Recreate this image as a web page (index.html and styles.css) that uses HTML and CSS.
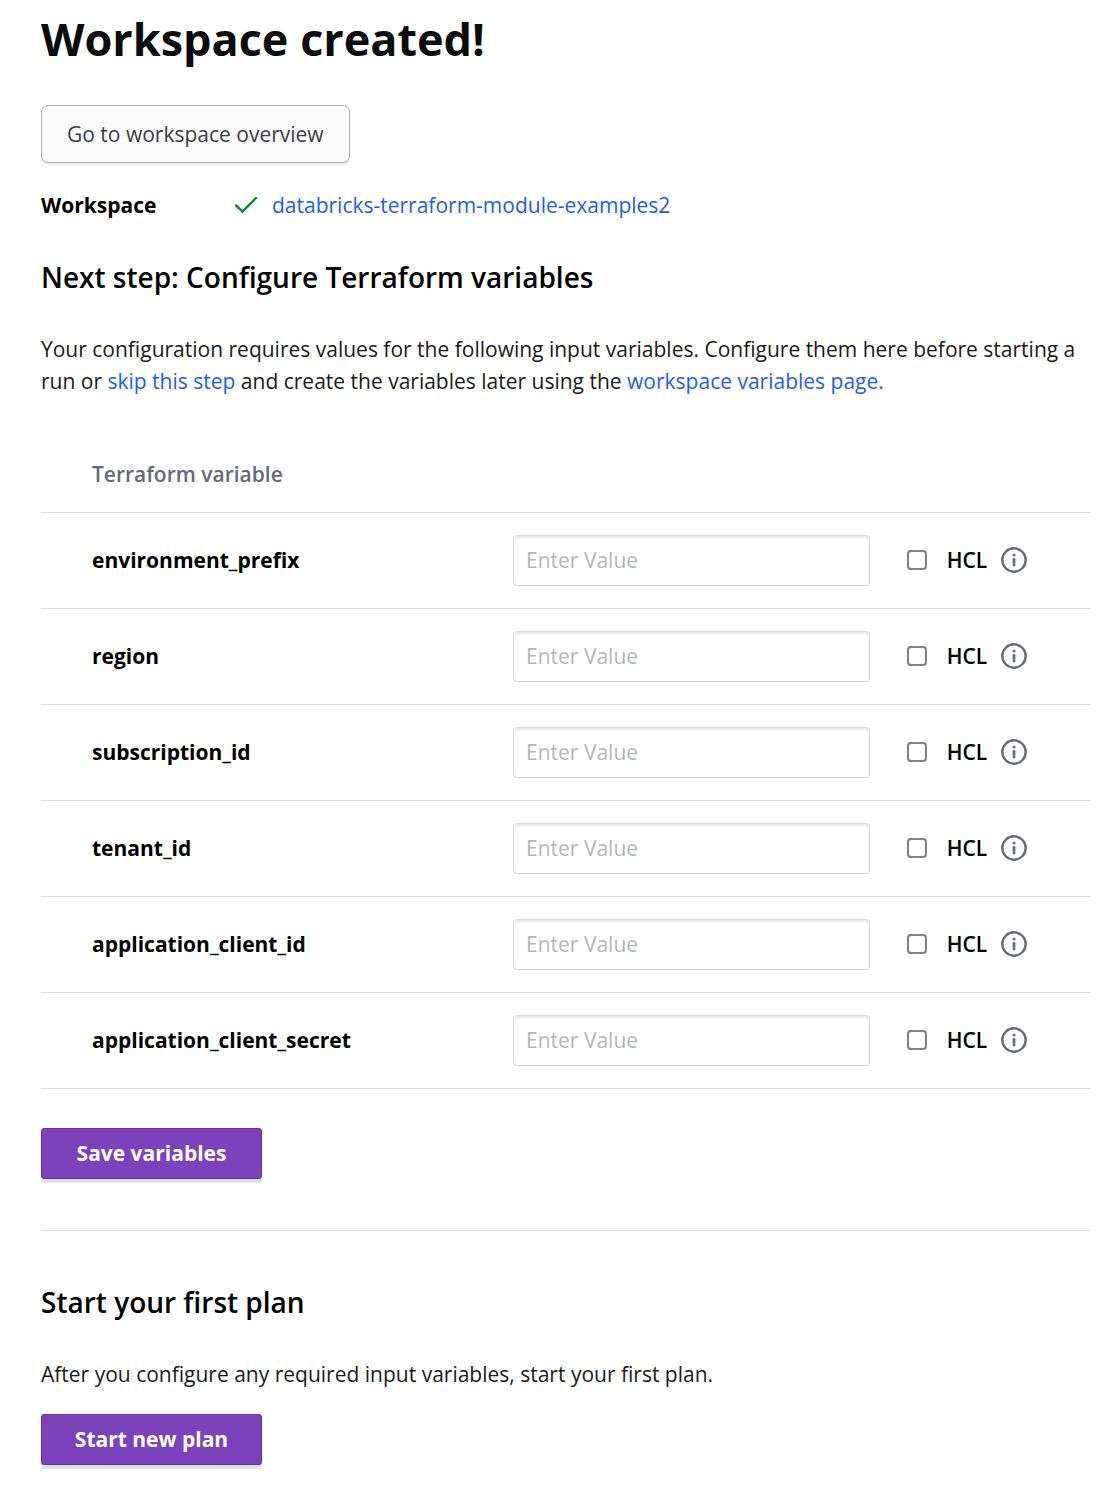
FILE: index.html
```html
<!DOCTYPE html>
<html lang="en">
<head>
    <meta charset="utf-8">
    <title>Workspace created!</title>
    <link rel="stylesheet" href="styles.css">
</head>
<body>
    <!-- shared info icon -->
    <svg class="sprite" aria-hidden="true">
        <symbol id="info" viewBox="0 0 26 26">
            <circle cx="13" cy="13" r="11.7" fill="none" stroke="currentColor" stroke-width="2.4"/>
            <circle cx="13" cy="8" r="1.6" fill="currentColor"/>
            <path d="M13 12.2v6" stroke="currentColor" stroke-width="2.6" stroke-linecap="round"/>
        </symbol>
    </svg>

    <main class="page">
        <h1>Workspace created!</h1>
        <button class="btn btn-secondary" type="button">Go to workspace overview</button>

        <div class="workspace">
            <span class="workspace-label">Workspace</span>
            <svg class="check" viewBox="0 0 24 18" aria-hidden="true">
                <path d="M2 9.5L8.5 15.5L22 2" fill="none" stroke="currentColor" stroke-width="2.4" stroke-linecap="round"/>
            </svg>
            <a href="#">databricks-terraform-module-examples2</a>
        </div>

        <h2>Next step: Configure Terraform variables</h2>
        <p>Your configuration requires values for the following input variables. Configure them here before starting a run or <a href="#">skip this step</a> and create the variables later using the <a href="#">workspace variables page.</a></p>

        <form>
            <table class="variables">
                <thead>
                    <tr>
                        <th class="col-name" scope="col">Terraform variable</th>
                        <td class="col-value"></td>
                        <td class="col-hcl"></td>
                    </tr>
                </thead>
                <tbody>
                    <tr>
                        <th scope="row"><label for="environment_prefix">environment_prefix</label></th>
                        <td><input class="value" type="text" id="environment_prefix" placeholder="Enter Value"></td>
                        <td><div class="hcl"><input type="checkbox" id="hcl-1"><label for="hcl-1">HCL</label><svg class="info"><use href="#info"/></svg></div></td>
                    </tr>
                    <tr>
                        <th scope="row"><label for="region">region</label></th>
                        <td><input class="value" type="text" id="region" placeholder="Enter Value"></td>
                        <td><div class="hcl"><input type="checkbox" id="hcl-2"><label for="hcl-2">HCL</label><svg class="info"><use href="#info"/></svg></div></td>
                    </tr>
                    <tr>
                        <th scope="row"><label for="subscription_id">subscription_id</label></th>
                        <td><input class="value" type="text" id="subscription_id" placeholder="Enter Value"></td>
                        <td><div class="hcl"><input type="checkbox" id="hcl-3"><label for="hcl-3">HCL</label><svg class="info"><use href="#info"/></svg></div></td>
                    </tr>
                    <tr>
                        <th scope="row"><label for="tenant_id">tenant_id</label></th>
                        <td><input class="value" type="text" id="tenant_id" placeholder="Enter Value"></td>
                        <td><div class="hcl"><input type="checkbox" id="hcl-4"><label for="hcl-4">HCL</label><svg class="info"><use href="#info"/></svg></div></td>
                    </tr>
                    <tr>
                        <th scope="row"><label for="application_client_id">application_client_id</label></th>
                        <td><input class="value" type="text" id="application_client_id" placeholder="Enter Value"></td>
                        <td><div class="hcl"><input type="checkbox" id="hcl-5"><label for="hcl-5">HCL</label><svg class="info"><use href="#info"/></svg></div></td>
                    </tr>
                    <tr>
                        <th scope="row"><label for="application_client_secret">application_client_secret</label></th>
                        <td><input class="value" type="text" id="application_client_secret" placeholder="Enter Value"></td>
                        <td><div class="hcl"><input type="checkbox" id="hcl-6"><label for="hcl-6">HCL</label><svg class="info"><use href="#info"/></svg></div></td>
                    </tr>
                </tbody>
            </table>
            <button class="btn btn-primary" type="button">Save variables</button>
        </form>

        <section class="plan">
            <h2>Start your first plan</h2>
            <p>After you configure any required input variables, start your first plan.</p>
            <button class="btn btn-primary" type="button">Start new plan</button>
        </section>
    </main>
</body>
</html>
```

FILE: styles.css
```css
* {
    box-sizing: border-box;
}
body {
    margin: 0;
    background: #fff;
    color: #000;
    font-family: "Open Sans", "Noto Sans", sans-serif;
    font-size: 21px;
    line-height: 32px;
}
.sprite {
    display: none;
}
.page {
    padding: 8px 18px 28px 41px;
}
h1 {
    margin: 0 0 36px;
    color: #0c0c0e;
    font-size: 45px;
    line-height: 61px;
    font-weight: 700;
}
h2 {
    margin: 0;
    font-size: 28px;
    line-height: 40px;
    font-weight: 600;
}
p {
    margin: 36px 0 0;
    color: #1a1a1a;
}
a {
    color: #1f5af6;
    text-decoration: none;
}
a:hover {
    text-decoration: underline;
}
.btn {
    display: block;
    font: inherit;
    cursor: pointer;
}
.btn-secondary {
    height: 58px;
    padding: 0 25px;
    border: 1px solid #aeb0b4;
    border-radius: 7px;
    background: #fafafa;
    color: #3b3d45;
    box-shadow: 0 2px 2px rgba(60, 64, 72, 0.1);
}
.btn-primary {
    width: 221px;
    height: 51px;
    border: 1px solid #643299;
    border-radius: 3px;
    background: #7b42bc;
    color: #fff;
    font-weight: 700;
    box-shadow: 0 4px 1px #dfe0e3;
}
.workspace {
    display: flex;
    align-items: center;
    margin: 26px 0 36px;
}
.workspace-label {
    width: 193px;
    font-weight: 700;
}
.check {
    width: 24px;
    height: 18px;
    margin-right: 14px;
    color: #0a8a2a;
}
.variables {
    width: 100%;
    margin: 39px 0;
    border-collapse: collapse;
    table-layout: fixed;
}
.variables tr {
    height: 96px;
    border-bottom: 1px solid #dcdcdc;
}
.variables thead tr {
    height: 76px;
}
.variables th {
    padding: 0 0 0 51px;
    text-align: left;
    font-weight: 700;
}
.variables thead th {
    color: #656a76;
    font-weight: 600;
}
.variables td {
    padding: 0;
}
.col-name {
    width: 45%;
}
.col-value {
    width: 34%;
}
.value {
    display: block;
    width: 100%;
    height: 51px;
    padding: 0 12px;
    border: 1px solid #dadada;
    border-radius: 3px;
    background: #fff;
    box-shadow: inset 0 2px 3px rgba(0, 0, 0, 0.1);
    font: inherit;
}
.value::placeholder {
    color: #b5b5b5;
}
.hcl {
    display: flex;
    align-items: center;
    padding-left: 37px;
    font-weight: 600;
}
.hcl input {
    appearance: none;
    width: 20px;
    height: 20px;
    margin: 0 20px 0 0;
    border: 2px solid #808080;
    border-radius: 4px;
    background: #fff;
}
.hcl input:checked {
    background: #1f5af6;
}
.info {
    width: 26px;
    height: 26px;
    margin-left: 14px;
    color: #656a76;
}
.plan {
    margin-top: 51px;
    padding-top: 51px;
    border-top: 1px solid #dcdcdc;
}
.plan p {
    margin: 36px 0 24px;
}
```
